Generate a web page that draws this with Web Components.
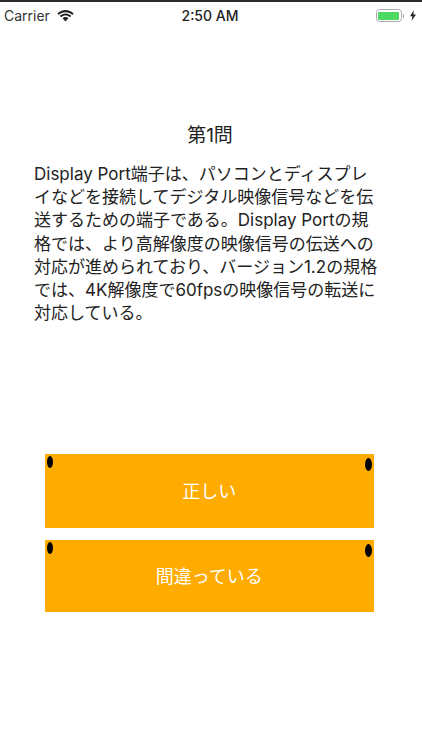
<!DOCTYPE html>
<html lang="ja">
<head>
<meta charset="utf-8">
<title>Quiz</title>
<style>
  html, body { margin: 0; background: #fff; }
  body { width: 422px; height: 750px; overflow: hidden; font-family: "Inter", "Noto Sans CJK JP", sans-serif; }
</style>
</head>
<body>
<quiz-screen>
  <status-bar slot="status"></status-bar>
  <span slot="title">第1問</span>
  <span slot="question">Display Port端子は、パソコンとディスプレイなどを接続してデジタル映像信号などを伝送するための端子である。Display Portの規格では、より高解像度の映像信号の伝送への対応が進められており、バージョン1.2の規格では、4K解像度で60fpsの映像信号の転送に対応している。</span>
  <answer-button slot="answers">正しい</answer-button>
  <answer-button slot="answers" style="height: 72px">間違っている</answer-button>
</quiz-screen>

<script>
class StatusBar extends HTMLElement {
    constructor() {
        super();
        this.shadow = this.attachShadow({mode: 'open'});
        this.shadow.innerHTML = `
            <style>
                :host {
                    display: grid;
                    grid-template-columns: 1fr auto 1fr;
                    align-items: center;
                    height: 27px;
                    padding: 0 6px 0 4px;
                    border-top: 2px solid #2a2a2a;
                    font: 14px/1 "Inter", "Liberation Sans", sans-serif;
                    color: #333;
                }
                .left, .right {
                    display: flex;
                    align-items: center;
                }
                .left { gap: 7px; }
                .right { justify-content: flex-end; gap: 1px; }
                .time { font-weight: 500; font-size: 14px; color: #222; }
                .battery {
                    width: 26px;
                    height: 13px;
                    box-sizing: border-box;
                    border: 1px solid #aaa;
                    border-radius: 3.5px;
                    padding: 1.5px;
                }
                .battery div { height: 100%; background: #4cd964; border-radius: 1px; }
                .cap { width: 1.5px; height: 4px; background: #aaa; }
                svg.bolt { margin-left: 5px; }
            </style>
            <div class="left">
                <span>Carrier</span>
                <svg width="17" height="12" viewBox="0 0 17 12" fill="#222">
                    <path d="M8.5 2.2c2.6 0 5 1 6.8 2.7L16.6 3.500C14.500 1.400 11.600 0 8.500 0S2.500 1.400.4 3.500l1.300 1.400C3.500 3.200 5.900 2.200 8.500 2.200z"/>
                    <path d="M8.500 5.500c1.700 0 3.200.6 4.400 1.700l1.400-1.400C12.800 4.300 10.800 3.400 8.500 3.400S4.200 4.300 2.700 5.800l1.400 1.400C5.300 6.100 6.800 5.500 8.500 5.500z"/>
                    <path d="M8.500 7c-1.100 0-2.200.5-2.900 1.200L8.500 11.500l2.900-3.300C10.700 7.500 9.600 7 8.500 7z"/>
                </svg>
            </div>
            <span class="time">2:50 AM</span>
            <div class="right">
                <div class="battery"><div></div></div>
                <div class="cap"></div>
                <svg class="bolt" width="6" height="11" viewBox="0 0 7 12" fill="#222">
                    <path d="M4.500 0L0 7h2.800L2 12l5-7.300H4z"/>
                </svg>
            </div>
        `;
    }
}

class AnswerButton extends HTMLElement {
    constructor() {
        super();
        this.shadow = this.attachShadow({mode: 'open'});
        this.shadow.innerHTML = `
            <style>
                :host {
                    display: flex;
                    position: relative;
                    align-items: center;
                    justify-content: center;
                    box-sizing: border-box;
                    height: 73.5px;
                    padding-bottom: 2px;
                    background: #ffab00;
                    color: #fff;
                    font: 18px/1 "Noto Sans CJK JP", sans-serif;
                }
                .hole {
                    position: absolute;
                    border-radius: 50%;
                    background: #000;
                }
                .hole.l { left: 1.5px; top: 2px; width: 6px; height: 12px; }
                .hole.r { right: 2px; top: 3.5px; width: 7px; height: 13px; }
            </style>
            <span class="hole l"></span>
            <slot></slot>
            <span class="hole r"></span>
        `;
    }
}

class QuizScreen extends HTMLElement {
    constructor() {
        super();
        this.shadow = this.attachShadow({mode: 'open'});
        this.shadow.innerHTML = `
            <style>
                :host {
                    display: flex;
                    flex-direction: column;
                    height: 750px;
                    color: #222;
                }
                .title {
                    margin-top: 95px;
                    padding-right: 2px;
                    text-align: center;
                    font: 19px/24px "Inter", "Noto Sans CJK JP", sans-serif;
                }
                .question {
                    margin: 15px 0 0 34px;
                    width: 346px;
                    font: 17px/23.2px "Inter", "Noto Sans CJK JP", sans-serif;
                }
                .answers {
                    display: flex;
                    flex-direction: column;
                    gap: 12.5px;
                    margin: 0 48.5px 0 45px;
                    padding-top: 129px;
                }
            </style>
            <slot name="status"></slot>
            <div class="title"><slot name="title"></slot></div>
            <div class="question"><slot name="question"></slot></div>
            <div class="answers"><slot name="answers"></slot></div>
        `;
    }
}

customElements.define('status-bar', StatusBar);
customElements.define('answer-button', AnswerButton);
customElements.define('quiz-screen', QuizScreen);
</script>
</body>
</html>
